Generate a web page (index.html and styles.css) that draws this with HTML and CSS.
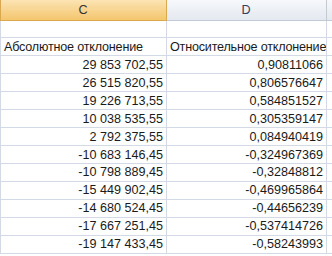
FILE: index.html
```html
<!DOCTYPE html>
<html lang="ru">
<head>
    <meta charset="UTF-8">
    <title>Отклонения</title>
    <link rel="stylesheet" href="styles.css">
</head>
<body>
<!-- Sheet fragment: columns C and D -->
<table class="sheet">
    <tr class="head">
        <th class="col-c selected">C</th>
        <th class="col-d">D</th>
        <th class="col-e"></th>
    </tr>
    <tr><td></td><td></td><td></td></tr>
    <tr>
        <td class="txt">Абсолютное отклонение</td>
        <td class="txt">Относительное отклонение</td>
        <td></td>
    </tr>
    <tr><td>29 853 702,55</td><td>0,90811066</td><td></td></tr>
    <tr><td>26 515 820,55</td><td>0,806576647</td><td></td></tr>
    <tr><td>19 226 713,55</td><td>0,584851527</td><td></td></tr>
    <tr><td>10 038 535,55</td><td>0,305359147</td><td></td></tr>
    <tr><td>2 792 375,55</td><td>0,084940419</td><td></td></tr>
    <tr><td>-10 683 146,45</td><td>-0,324967369</td><td></td></tr>
    <tr><td>-10 798 889,45</td><td>-0,32848812</td><td></td></tr>
    <tr><td>-15 449 902,45</td><td>-0,469965864</td><td></td></tr>
    <tr><td>-14 680 524,45</td><td>-0,44656239</td><td></td></tr>
    <tr><td>-17 667 251,45</td><td>-0,537414726</td><td></td></tr>
    <tr><td>-19 147 433,45</td><td>-0,58243993</td><td></td></tr>
</table>
</body>
</html>
```

FILE: styles.css
```css
/* Spreadsheet look */
body {
    margin: 0;
    background: #fff;
    font-family: "Liberation Sans", Arial, sans-serif;
    overflow: hidden;
}

.sheet {
    border-collapse: collapse;
    table-layout: fixed;
    width: 336px;
    font-size: 12.6px;
    line-height: 14px;
    color: #1a1a1a;
}

.sheet tr {
    height: 17.95px;
}

.sheet td,
.sheet th {
    border: 1px solid #d4dae5;
    padding: 0 3px 0 2px;
    white-space: nowrap;
    overflow: hidden;
    text-align: right;
}

.sheet td.txt {
    text-align: left;
    padding-left: 3px;
    letter-spacing: -0.2px;
}

.sheet tr.head {
    height: 20px;
}

.head th {
    font-weight: normal;
    text-align: center;
    color: #33405a;
    background: linear-gradient(#f6f8fb, #e3e8ef);
    border-color: #c2cad6;
    border-top: none;
}

.head th.selected {
    background: linear-gradient(#fbe3b3, #f4c66e);
    border-color: #d9a84f;
    color: #333;
}

.col-c {
    width: 160px;
    border-left: none;
}

.col-d {
    width: 154px;
}

.col-e {
    width: 6px;
}
```
